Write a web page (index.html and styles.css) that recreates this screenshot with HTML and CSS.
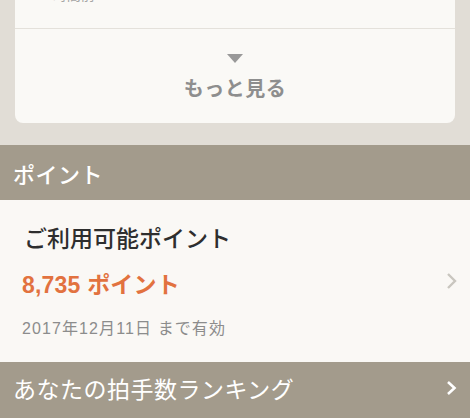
FILE: index.html
```html
<!DOCTYPE html>
<html lang="ja">
<head>
    <meta charset="UTF-8">
    <meta name="viewport" content="width=device-width, initial-scale=1.0">
    <title>マイページ</title>
    <link rel="stylesheet" href="styles.css">
</head>
<body>
<div class="card">
    <div class="card-item">
        <span class="item-date">2時間前</span>
    </div>
    <div class="more">
        <span class="more-arrow"></span>
        <span class="more-label">もっと見る</span>
    </div>
</div>

<div class="section-head">ポイント</div>
<div class="points">
    <div class="points-body">
        <div class="points-title">ご利用可能ポイント</div>
        <div class="points-value">8,735 ポイント</div>
        <div class="points-limit">2017年12月11日 まで有効</div>
    </div>
    <svg class="chevron" width="11" height="18" viewBox="0 0 11 18">
        <path d="M2 2 L9 9 L2 16" fill="none" stroke="#c9c6bf" stroke-width="2.4"/>
    </svg>
</div>

<div class="section-head link">
    <span>あなたの拍手数ランキング</span>
    <svg class="chevron" width="11" height="16" viewBox="0 0 11 16">
        <path d="M2 2 L8.5 8 L2 14" fill="none" stroke="#ffffff" stroke-width="2.6"/>
    </svg>
</div>
</body>
</html>
```

FILE: styles.css
```css
body {
    margin: 0;
    background-color: #e1ddd6;
    font-family: "Liberation Sans", "Noto Sans CJK JP", sans-serif;
    overflow: hidden;
}
/* 上のカード */
.card {
    margin: -30px 15px 0;
    background-color: #faf9f6;
    border-radius: 0 0 8px 8px;
}
.card-item {
    height: 58px;
    border-bottom: 1px solid #e4e1db;
    padding-left: 30px;
    display: flex;
    align-items: flex-end;
}
.item-date {
    font-size: 14px;
    line-height: 14px;
    color: #a5a5a5;
    margin-bottom: 26px;
}
.more {
    height: 94px;
    display: flex;
    flex-direction: column;
    align-items: center;
}
.more-arrow {
    width: 0;
    height: 0;
    margin-top: 25px;
    border-left: 8px solid transparent;
    border-right: 8px solid transparent;
    border-top: 9px solid #999999;
}
.more-label {
    margin-top: 10px;
    font-size: 20px;
    font-weight: bold;
    color: #8e8e8e;
    letter-spacing: 0.5px;
}
/* セクション見出し */
.section-head {
    margin-top: 22px;
    height: 55px;
    background-color: #a39b8c;
    color: #ffffff;
    font-size: 22px;
    font-weight: 500;
    letter-spacing: 0.5px;
    padding: 0 13px;
    display: flex;
    align-items: center;
    justify-content: space-between;
}
.section-head.link {
    margin-top: 0;
    height: 52px;
    padding-bottom: 4px;
    font-size: 23px;
    font-weight: normal;
}
.points {
    height: 162px;
    background-color: #faf8f5;
    display: flex;
    align-items: center;
    justify-content: space-between;
    padding: 0 13px 0 24px;
}
.points-body {
    display: flex;
    flex-direction: column;
}
.points-title {
    font-size: 23px;
    font-weight: 500;
    color: #2e2e2e;
    margin-top: -3px;
}
.points-value {
    margin-top: 12px;
    font-size: 23px;
    font-weight: bold;
    color: #e2723f;
    letter-spacing: 0.2px;
    margin-left: -2px;
}
.points-limit {
    margin-top: 15px;
    font-size: 16px;
    color: #8c8c8c;
    letter-spacing: 1.1px;
    margin-left: -2px;
}
.chevron {
    flex-shrink: 0;
}
```
